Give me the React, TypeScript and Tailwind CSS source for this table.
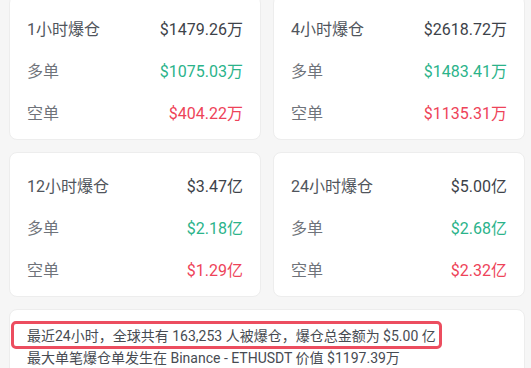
import React from "react";

type Card = {
  title: string;
  total: string;
  long: string;
  short: string;
};

const cards: Card[] = [
  { title: "1小时爆仓", total: "$1479.26万", long: "$1075.03万", short: "$404.22万" },
  { title: "4小时爆仓", total: "$2618.72万", long: "$1483.41万", short: "$1135.31万" },
  { title: "12小时爆仓", total: "$3.47亿", long: "$2.18亿", short: "$1.29亿" },
  { title: "24小时爆仓", total: "$5.00亿", long: "$2.68亿", short: "$2.32亿" },
];

function StatCard({ c }: { c: Card }) {
  return (
    <div className="bg-white border border-[#ededed] rounded-[8px] px-[17px] pt-[22px] pb-[13px] flex flex-col gap-[18px]">
      <div className="flex items-center justify-between h-6 text-[16px]">
        <span className="text-[#50555c]">{c.title}</span>
        <span className="text-[#3d4249]">{c.total}</span>
      </div>
      <div className="flex items-center justify-between h-6 text-[16px]">
        <span className="text-[#6f737a]">多单</span>
        <span className="text-[#2bb38a]">{c.long}</span>
      </div>
      <div className="flex items-center justify-between h-6 text-[16px]">
        <span className="text-[#6f737a]">空单</span>
        <span className="text-[#ee4359]">{c.short}</span>
      </div>
    </div>
  );
}

export default function App() {
  return (
    <div
      className="w-[531px] h-[368px] overflow-hidden bg-[#f6f6f6]"
      style={{ fontFamily: "Roboto, 'Noto Sans CJK SC', sans-serif" }}
    >
      <div className="pl-[9px] pr-[6px] -mt-[5px] flex flex-col gap-[12px]">
        <div className="grid grid-cols-2 gap-[12px]">
          {cards.map((c) => (
            <StatCard key={c.title} c={c} />
          ))}
        </div>

        <div className="bg-white border border-[#ededed] rounded-[8px] px-[17px] pt-[15px] pb-3 text-[14px] leading-[22px] text-[#474b52]">
          <div className="relative w-fit">
            <span>最近24小时，全球共有 163,253 人被爆仓，爆仓总金额为 $5.00 亿</span>
            <div className="absolute -left-[16px] -right-[6px] -top-[4px] -bottom-[2px] border-[3px] border-[#ec4d5f] rounded-[5px]" />
          </div>
          <div>最大单笔爆仓单发生在 Binance - ETHUSDT 价值 $1197.39万</div>
        </div>
      </div>
    </div>
  );
}
